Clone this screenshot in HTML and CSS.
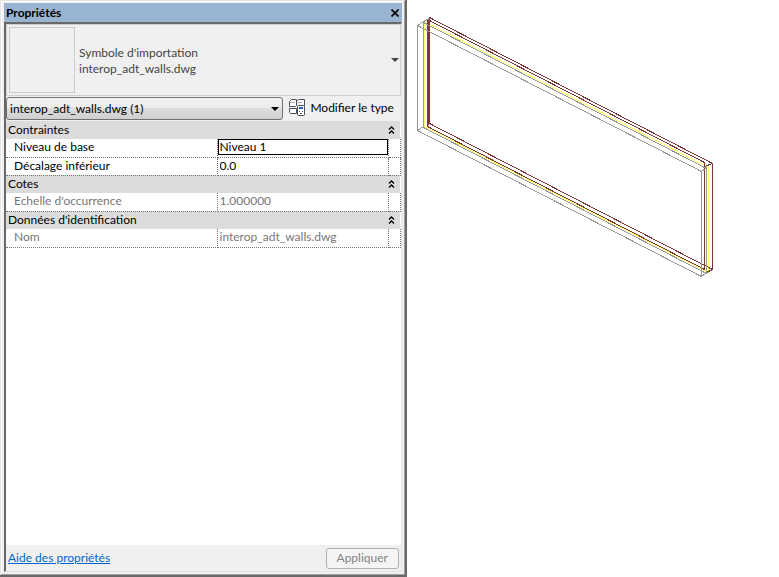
FILE: index.html
```
<!DOCTYPE html>
<html lang="fr">
<head>
    <meta charset="utf-8">
    <meta name="viewport" content="width=device-width, initial-scale=1">
    <title>Propriétés</title>
    <link rel="stylesheet" href="styles.css">
</head>
<body>
    <svg class="symbols" xmlns="http://www.w3.org/2000/svg">
        <symbol id="collapse" viewBox="0 0 7 8">
            <path d="M1 3.5L3.5 1L6 3.5M1 7.5L3.5 5L6 7.5" fill="none" stroke="#000" stroke-width="1.3"/>
        </symbol>
    </svg>

    <section class="palette">
        <header class="titlebar">
            <h1>Propriétés</h1>
            <button class="close" type="button" aria-label="Fermer">
                <svg width="8" height="8" viewBox="0 0 8 8"><path d="M0.5 0.5L7.5 7.5M7.5 0.5L0.5 7.5" stroke="#000" stroke-width="1.6"/></svg>
            </button>
        </header>

        <div class="content">
            <button class="type" type="button">
                <span class="preview"></span>
                <span class="type-name">Symbole d'importation<br>interop_adt_walls.dwg</span>
                <svg width="8" height="4" viewBox="0 0 8 4"><path d="M0 0H8L4 4Z" fill="#444"/></svg>
            </button>

            <div class="filter">
                <div class="combo">
                    <select aria-label="Filtre">
                        <option>interop_adt_walls.dwg (1)</option>
                    </select>
                    <svg width="8" height="4" viewBox="0 0 8 4"><path d="M0 0H8L4 4Z" fill="#000"/></svg>
                </div>
                <button class="edit-type" type="button">
                    <svg width="17" height="17" viewBox="0 0 17 17" fill="#fff" stroke="#4a5058">
                        <path d="M0.5 7.5V2.5L2.5 0.5H7.5V6.5L6.5 7.5ZM7.5 2.5L9.5 0.5H15.5V7M0.5 9.5H7.5V14.5H1.5L0.5 13.5Z"/>
                        <path d="M1 3.5H6M8.5 3.5H13" stroke="#aeb3b8"/>
                        <rect x="8.5" y="6.5" width="7" height="10" rx="1"/>
                        <path d="M10 9H14" stroke="#1c62b5" stroke-width="2"/>
                        <path d="M10 12.5H11M13 12.5H14M11 14.5H13" stroke="#4a5058"/>
                    </svg>
                    Modifier le type
                </button>
            </div>

            <div class="grid-area">
                <table>
                    <colgroup><col class="col-name"><col><col class="col-btn"></colgroup>
                    <tbody>
                        <tr class="group">
                            <th colspan="2">Contraintes</th>
                            <td><button type="button" aria-label="Réduire Contraintes"><svg width="7" height="8"><use href="#collapse"/></svg></button></td>
                        </tr>
                        <tr>
                            <th><label for="niveau">Niveau de base</label></th>
                            <td><input class="active" id="niveau" type="text" value="Niveau 1"></td>
                            <td></td>
                        </tr>
                        <tr>
                            <th><label for="decalage">Décalage inférieur</label></th>
                            <td><input id="decalage" type="text" value="0.0"></td>
                            <td></td>
                        </tr>
                    </tbody>
                    <tbody>
                        <tr class="group">
                            <th colspan="2">Cotes</th>
                            <td><button type="button" aria-label="Réduire Cotes"><svg width="7" height="8"><use href="#collapse"/></svg></button></td>
                        </tr>
                        <tr class="readonly">
                            <th><label for="echelle">Echelle d'occurrence</label></th>
                            <td><input id="echelle" type="text" value="1.000000" readonly></td>
                            <td></td>
                        </tr>
                    </tbody>
                    <tbody>
                        <tr class="group">
                            <th colspan="2">Données d'identification</th>
                            <td><button type="button" aria-label="Réduire Données d'identification"><svg width="7" height="8"><use href="#collapse"/></svg></button></td>
                        </tr>
                        <tr class="readonly">
                            <th><label for="nom">Nom</label></th>
                            <td><input id="nom" type="text" value="interop_adt_walls.dwg" readonly></td>
                            <td></td>
                        </tr>
                    </tbody>
                </table>
            </div>

            <footer class="actions">
                <a href="#">Aide des propriétés</a>
                <button class="apply" type="button" disabled>Appliquer</button>
            </footer>
        </div>
    </section>

    <main class="view">
        <svg viewBox="407 0 372 300" fill="none" shape-rendering="crispEdges">
            <!-- isolant -->
            <path stroke="#ffff66" d="M424.5 21.5L708.5 167.5V272.5L424.5 126.5Z"/>
            <!-- finition -->
            <g stroke="#7a3838">
                <path d="M429.5 17.5L712.5 163.5V269.5L429.5 123.5Z"/>
                <path d="M427.5 19.5L704.5 162.5V269.5L427.5 126.5Z"/>
                <path d="M428.5 19V125M427.5 19.5L429.5 17.5M704.5 166.5L712.5 163.5M706.5 272.5L712.5 269.5"/>
            </g>
            <!-- parement -->
            <g stroke="#999">
                <path d="M423.5 22.5L706.5 168.5V273.5L423.5 127.5Z"/>
                <path d="M417.5 25.5L701.5 171.5V276.5L417.5 130.5Z"/>
                <path d="M417.5 25.5L423.5 21.5L429.5 18.5M701.5 171.5L706.5 167.5M701.5 276.5L706.5 272.5M417.5 130.5L423.5 126.5"/>
            </g>
        </svg>
    </main>
</body>
</html>
```
FILE: styles.css
```
* { margin: 0; padding: 0; box-sizing: border-box; }

body {
    display: grid;
    grid-template-columns: 35fr 32fr;
    min-height: 100vh;
    background: #fff;
    color: #000;
    font-family: Lato, "Open Sans", sans-serif;
    font-size: 12px;
    line-height: 16px;
}

button, input, select { font: inherit; color: inherit; }
button { border: 0; background: none; }
.symbols { display: none; }

.palette {
    display: flex;
    flex-direction: column;
    padding: 3px 3px 3px 4px;
    border-right: 2px solid #696969;
    border-bottom: 2px solid #696969;
    background: #f0f0f0;
    box-shadow: inset 1px 1px #e3e3e3, inset -1px -1px #a0a0a0, inset 2px 2px #fff;
}

.titlebar {
    display: flex;
    align-items: center;
    justify-content: space-between;
    height: 19px;
    padding: 0 3px 0 2px;
    background: #99b4d1;
}
.titlebar h1 { font-size: 12px; }
.close { display: flex; padding: 0; }

.content {
    display: flex;
    flex-direction: column;
    flex: 1;
    border: 1px solid #e3e3e3;
    border-top: 2px solid #696969;
    border-left: 2px solid #696969;
}

.type {
    display: flex;
    align-items: center;
    height: 72px;
    padding: 2px;
    padding-right: 1px;
    border: 1px solid #d0d0d0;
    text-align: left;
    color: #444;
}
.preview { width: 66px; height: 66px; border: 1px solid #ccc; }
.type-name { flex: 1; padding: 2px 0 0 4px; }

.filter {
    display: flex;
    align-items: center;
    height: 25px;
    gap: 6px;
    padding-right: 7px;
}
.combo { display: grid; flex: 1; align-items: center; }
.combo select, .combo svg { grid-area: 1 / 1; }
.combo svg { justify-self: end; margin-right: 4px; pointer-events: none; }
.combo select {
    width: 100%;
    height: 23px;
    padding-left: 3px;
    appearance: none;
    border: 1px solid #707070;
    border-radius: 3px;
    background: linear-gradient(#f2f2f2, #ebebeb 50%, #ddd 50%, #cfcfcf);
}
.edit-type { display: flex; align-items: center; gap: 4px; padding-bottom: 2px; }

.grid-area { flex: 1; background: #fff; }
table { width: 100%; border-collapse: collapse; table-layout: fixed; }
.col-name { width: 211px; }
.col-btn { width: 12px; }
th, td { height: 18px; border: 1px dotted #777; border-top: 0; line-height: 16px; vertical-align: top; }
th { padding-left: 8px; border-left: 0; font-weight: normal; text-align: left; }
.group { background: #dcdcdc; }
.group th, .group td { border: 0; vertical-align: middle; }
.group th { padding-left: 2px; }
.group button { display: flex; }
td input {
    display: block;
    width: 100%;
    height: 16px;
    padding-left: 2px;
    border: 0;
    outline: 0;
    background: none;
}
td .active { padding-left: 1px; border: 1px solid #000; }
.readonly { color: #777; }

.actions {
    display: flex;
    align-items: center;
    justify-content: space-between;
    height: 26px;
    padding: 0 2px;
}
.actions a { color: #06c; }
.apply {
    height: 21px;
    padding: 0 10px;
    border: 1px solid #adb2b5;
    border-radius: 3px;
    background: #f4f4f4;
    color: #838383;
}

.view svg { display: block; width: 100%; }
```
